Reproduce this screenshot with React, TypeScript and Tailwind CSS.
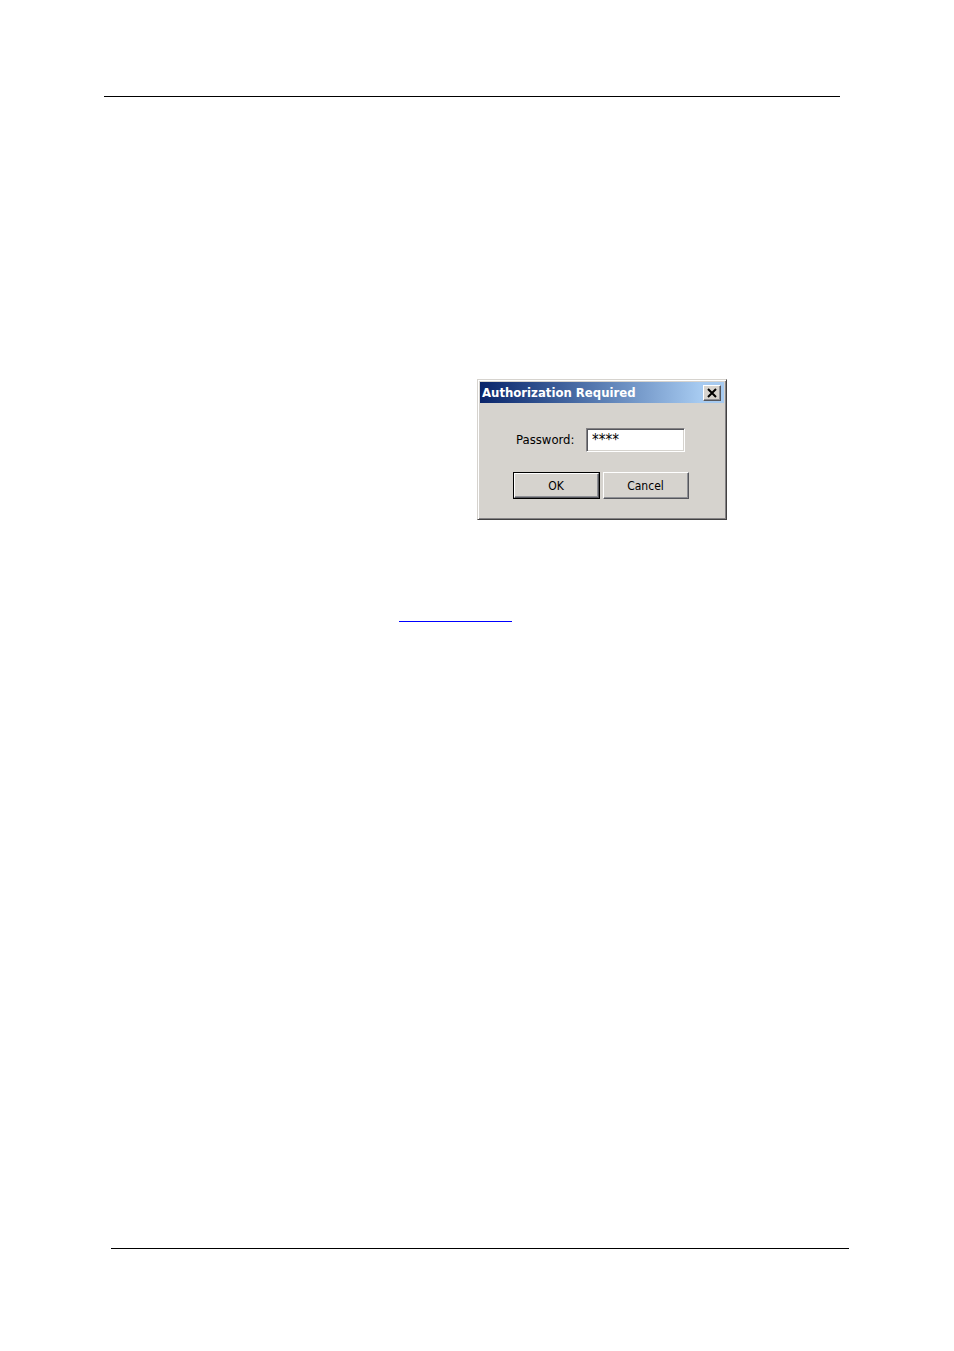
import { useState } from "react";

// Classic two-tone bevels: outer edge from the border, inner edge from inset shadows.
const RAISED =
  "border border-t-white border-l-white border-r-[#55565c] border-b-[#55565c] bg-[#d6d3ce] shadow-[inset_-1px_-1px_0_#8f9095]";

function CloseIcon() {
  return (
    <svg width="10" height="10" viewBox="0 0 10 10" aria-hidden="true">
      <path d="M1 1L9 9M9 1L1 9" stroke="#000" strokeWidth="2" fill="none" />
    </svg>
  );
}

function AuthDialog() {
  const [password, setPassword] = useState("****");

  return (
    <section
      aria-labelledby="auth-title"
      className="w-[250px] border border-t-[#d6d3ce] border-l-[#d6d3ce] border-r-[#424142] border-b-[#424142] bg-[#d6d3ce] p-0.5 pb-5 text-xs text-black shadow-[inset_1px_1px_0_#fff,inset_-1px_-1px_0_#848284] [font-family:'DejaVu_Sans_Condensed','Noto_Sans',sans-serif]"
    >
      <header className="flex h-[21px] items-center justify-between bg-linear-to-r from-[#0a246a] to-[#a6caf0] to-90% pr-[3px] pl-0.5">
        <h1 id="auth-title" className="whitespace-nowrap text-[13px] font-bold text-white">
          Authorization Required
        </h1>
        <button type="button" aria-label="Close" className={`flex h-4 w-[18px] items-center justify-center ${RAISED}`}>
          <CloseIcon />
        </button>
      </header>

      <form onSubmit={(e) => e.preventDefault()}>
        <div className="mt-[25px] flex items-center pr-[39px] pl-9">
          <label htmlFor="password" className="flex-1 text-[13px]">
            Password:
          </label>
          <input
            id="password"
            type="text"
            autoComplete="off"
            value={password}
            onChange={(e) => setPassword(e.target.value)}
            className="h-6 w-[99px] border border-t-[#848284] border-l-[#848284] border-r-white border-b-white bg-white px-[5px] text-[15px] outline-none shadow-[inset_1px_1px_0_#55565c,inset_-1px_-1px_0_#d6d3ce]"
          />
        </div>
        <div className="mt-5 flex justify-center gap-[3px] pr-[3px]">
          <button type="submit" className="h-[27px] w-[87px] border border-black">
            <span className={`flex h-full items-center justify-center ${RAISED}`}>OK</span>
          </button>
          <button type="button" className={`h-[27px] w-[86px] ${RAISED}`}>
            Cancel
          </button>
        </div>
      </form>
    </section>
  );
}

export default function App() {
  return (
    <div className="flex min-h-screen flex-col bg-white pt-24 pb-[102px]">
      <hr className="mr-[114px] ml-[104px] border-black" />
      <main className="flex flex-1 flex-col pt-[282px]">
        <div className="pl-[50%]">
          <AuthDialog />
        </div>
        <a href="#" aria-label="Reference" className="mt-20 ml-[399px] block h-[22px] w-[113px] border-b border-[#0000ff]" />
      </main>
      <hr className="mr-[105px] ml-[111px] border-black" />
    </div>
  );
}
